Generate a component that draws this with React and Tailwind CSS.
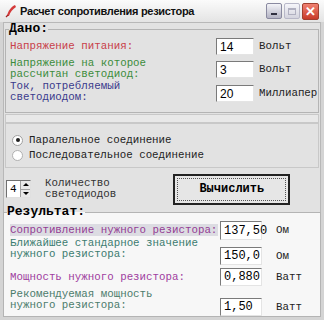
import React from "react";

const mono = { fontFamily: '"Liberation Mono", "DejaVu Sans Mono", monospace' };
const sans = { fontFamily: '"Liberation Sans", Arial, sans-serif' };

function Sunken({ value, w, h, font, mt }) {
  return (
    <div
      className={`${w} ${h} ${mt} bg-white border border-t-[#7a7a7a] border-l-[#7a7a7a] border-r-[#e4e4e4] border-b-[#e4e4e4] flex items-center pl-[3px] leading-none shrink-0 text-black text-[12px]`}
      style={font === "mono" ? mono : sans}
    >
      {value}
    </div>
  );
}

function Row({ lines, color, value, unit, hl, inputW = "w-[38px]", ih = "h-[17px]", font, mt = "", imt = "", unitW = "w-[64px]", unitPl = "pl-[5px]", align = "items-start" }) {
  return (
    <div className={`flex ${align} ${mt}`}>
      <div className={`flex-1 min-w-0 whitespace-nowrap leading-[11px] text-[10.8px] ${color}`} style={mono}>
        {lines.map((l, i) => (
          <div key={i}>
            <span className={hl ? "bg-[#dcdce2] pr-[1px]" : ""}>{l}</span>
          </div>
        ))}
      </div>
      <Sunken value={value} w={inputW} font={font} h={ih} mt={imt} />
      <div className={`${unitW} ${unitPl} text-[10.8px] text-[#222] whitespace-nowrap ${imt} ${ih} flex items-center`} style={mono}>{unit}</div>
    </div>
  );
}

export default function App() {
  return (
    <div className="w-[324px] h-[320px] bg-[#d4d4d4] overflow-hidden">
      {/* Title bar */}
      <div className="h-[22px] flex items-center bg-gradient-to-b from-[#fbfbfb] to-[#e4e4e4] pl-[5px] pr-[5px]">
        <svg width="12" height="14" viewBox="0 0 12 14" className="mr-[3px]">
          <path d="M10 1 C6 3 3 7 2 12 L4 12 C5 8 8 5 11 3 Z" fill="#d43a3a" />
          <path d="M3 11 L1 13" stroke="#a02020" strokeWidth="1.2" />
        </svg>
        <span className="text-[11px] font-bold text-[#111] tracking-[-0.3px]" style={sans}>
          Расчет сопротивления резистора
        </span>
        <div className="ml-auto flex gap-[2px] items-center">
          <div className="w-[16px] h-[16px] rounded-[2px] border border-[#8a8aa0] bg-gradient-to-b from-[#f4f4f8] to-[#b4b4c4] flex items-end justify-center pb-[3px]">
            <div className="w-[6px] h-[2px] bg-[#303040]" />
          </div>
          <div className="w-[16px] h-[16px] rounded-[2px] border border-[#b8b8c8] bg-gradient-to-b from-[#f6f6fa] to-[#d4d4de] flex items-center justify-center">
            <div className="w-[8px] h-[7px] border border-[#b0b0c0] border-t-2" />
          </div>
          <div className="w-[17px] h-[17px] rounded-[2px] border border-[#a04030] bg-gradient-to-b from-[#f08070] to-[#c83a28] flex items-center justify-center text-white text-[13px] font-bold leading-none" style={sans}>
            ✕
          </div>
        </div>
      </div>

      {/* Body */}
      <div className="mx-[3px] bg-[#e2e2e2] border border-[#b8b8b8] h-[295px] flex flex-col">
        {/* Dano */}
        <fieldset className="border border-[#b4b4b4] mx-[1px] mt-[-1px] px-0 pb-[9px] pt-0 min-w-0">
          <legend className="text-[13px] font-bold text-black ml-[3px] px-0 leading-[14px]" style={mono}>Дано:</legend>
          <div className="pl-[4px]">
            <Row lines={["Напряжение питания:"]} color="text-[#c8404a]" value="14" unit="Вольт" mt="mt-[2px]" align="items-center" />
            <Row lines={["Напряжение на которое", "рассчитан светодиод:"]} color="text-[#3c8c3c]" value="3" unit="Вольт" mt="mt-[3px]" imt="mt-[3px]" />
            <Row lines={["Ток, потребляемый", "светодиодом:"]} color="text-[#3a3a8c]" value="20" unit="Миллиапер" mt="mt-[1px]" imt="mt-[4px]" />
          </div>
        </fieldset>

        <div className="h-[9px] mx-[1px] mt-[1px] border border-[#c8c8c8] bg-[#e8e8e8]" />

        {/* Radios */}
        <div className="mx-[1px] border border-[#c8c8c8] h-[46px] flex flex-col justify-center gap-[3px] pl-[6px] pt-[4px]">
          <div className="flex items-center gap-[6px] text-[10.8px] text-[#222] leading-[12px]" style={mono}>
            <div className="w-[11px] h-[11px] rounded-full bg-white border border-[#a0a0a0] flex items-center justify-center">
              <div className="w-[4px] h-[4px] rounded-full bg-[#222]" />
            </div>
            Паралельное соединение
          </div>
          <div className="flex items-center gap-[6px] text-[10.8px] text-[#222] leading-[12px]" style={mono}>
            <div className="w-[11px] h-[11px] rounded-full bg-white border border-[#b0b0b0]" />
            Последовательное соединение
          </div>
        </div>

        {/* Spinner + button */}
        <div className="h-[37px] mx-[1px] flex items-center pl-[1px] pt-[5px]">
          <div className="w-[25px] h-[18px] bg-white border border-t-[#707070] border-l-[#707070] border-r-[#e0e0e0] border-b-[#e0e0e0] flex items-center">
            <span className="text-[11px] pl-[3px] flex-1" style={mono}>4</span>
            <div className="w-[10px] h-full flex flex-col bg-[#e8e8e8] border-l border-[#a0a0a0]">
              <div className="flex-1 flex items-center justify-center border-b border-[#a0a0a0]">
                <div className="w-0 h-0 border-l-[3px] border-r-[3px] border-b-[3px] border-l-transparent border-r-transparent border-b-black" />
              </div>
              <div className="flex-1 flex items-center justify-center">
                <div className="w-0 h-0 border-l-[3px] border-r-[3px] border-t-[3px] border-l-transparent border-r-transparent border-t-black" />
              </div>
            </div>
          </div>
          <div className="ml-[14px] text-[10.8px] leading-[11px] text-[#333]" style={mono}>
            <div>Количество</div>
            <div>светодиодов</div>
          </div>
          <div className="ml-[57px] w-[117px] h-[31px] border-2 border-[#222] bg-[#e6e6e6] p-[2px]">
            <div className="w-full h-full border border-dotted border-[#555] flex items-center justify-center text-[12px] font-bold text-black" style={mono}>
              Вычислить
            </div>
          </div>
        </div>

        {/* Results */}
        <fieldset className="flex-1 bg-[#f7f7f7] border border-[#b4b4b4] mx-[-1px] mb-[-1px] px-0 pt-0 pb-0 min-w-0">
          <legend className="text-[13px] font-bold text-black ml-[3px] px-0 leading-[14px]" style={mono}>Результат:</legend>
          <div className="pl-[6px]">
            <Row lines={["Сопротивление нужного резистора:"]} color="text-[#943c94]" hl value="137,50" unit="Ом" inputW="w-[42px]" font="mono" ih="h-[19px]" mt="mt-[2px]" unitW="w-[58px]" unitPl="pl-[14px]" align="items-center" />
            <Row lines={["Ближайшее стандарное значение", "нужного резистора:"]} color="text-[#3c7c70]" value="150,0" unit="Ом" inputW="w-[42px]" font="mono" ih="h-[18px]" mt="mt-[-2px]" imt="mt-[9px]" unitW="w-[58px]" unitPl="pl-[14px]" />
            <Row lines={["Мощность нужного резистора:"]} color="text-[#a040a0]" value="0,880" unit="Ватт" inputW="w-[42px]" font="mono" ih="h-[18px]" mt="mt-[3px]" unitW="w-[58px]" unitPl="pl-[14px]" align="items-center" />
            <Row lines={["Рекомендуемая мощность", "нужного резистора:"]} color="text-[#4c7c6c]" value="1,50" unit="Ватт" inputW="w-[42px]" font="mono" ih="h-[18px]" mt="mt-[3px]" imt="mt-[9px]" unitW="w-[58px]" unitPl="pl-[14px]" />
          </div>
        </fieldset>
      </div>
    </div>
  );
}
